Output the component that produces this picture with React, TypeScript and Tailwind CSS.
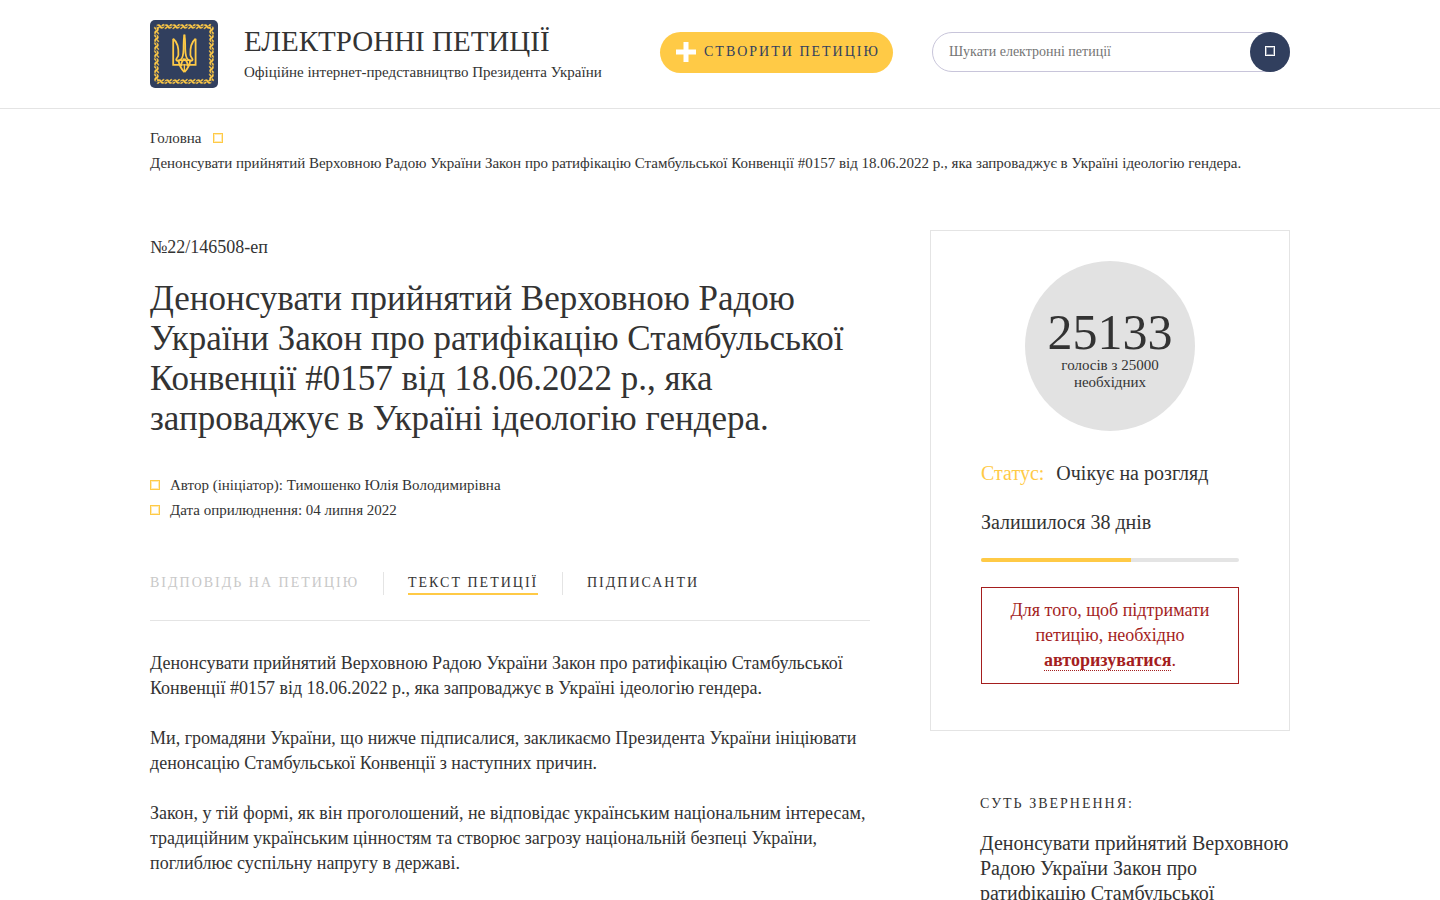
import React from "react";

const PETITION_TITLE =
  "Денонсувати прийнятий Верховною Радою України Закон про ратифікацію Стамбульської Конвенції #0157 від 18.06.2022 р., яка запроваджує в Україні ідеологію гендера.";

const PARAGRAPHS = [
  PETITION_TITLE,
  "Ми, громадяни України, що нижче підписалися, закликаємо Президента України ініціювати денонсацію Стамбульської Конвенції з наступних причин.",
  "Закон, у тій формі, як він проголошений, не відповідає українським національним інтересам, традиційним українським цінностям та створює загрозу національній безпеці України, поглиблює суспільну напругу в державі.",
];

function Ornament() {
  const steps = [0, 1, 2, 3, 4, 5, 6];
  return (
    <g fill="#ffca46" stroke="#ffca46" strokeWidth="0.4">
      {[0, 90, 180, 270].map((angle) => (
        <g key={angle} transform={`rotate(${angle} 34 34)`}>
          {steps.map((n) => (
            <g key={n} transform={`translate(${6.6 + n * 7.8} 4)`}>
              <path d="M0 1.2 C1.6 -.2 3.6 .4 4.4 2.2 C4.9 3.3 6 3.6 7.8 2.6 C7 4.6 4.4 5.2 3.4 3.6 C2.6 2.2 1.6 1.6 0 1.2 Z" />
              <path d="M.4 4.8 C.8 3.4 1.8 2.8 3 3 C2.6 4.3 1.7 4.9 .4 4.8 Z" />
              <path d="M5 2 C5.2 .8 6.2 .1 7.6 .4 C7.2 1.8 6.3 2.4 5 2 Z" />
            </g>
          ))}
        </g>
      ))}
    </g>
  );
}

function TridentHalf() {
  return (
    <g>
      <path d="M23.2 18.8 V44.8 H31" />
      <path d="M23.2 18.8 C27.8 22.5 28.8 28 28.4 35 C28.2 37.5 26 38 26.2 39.8 C26.6 41.4 29 40.8 30.8 39.6 C33 38 33.4 34 33.6 29 C33.7 23 33.4 20 34.4 14.6" />
      <path d="M28.6 40.6 C29.2 46 31 48.6 34.4 52.2" />
      <path d="M34.4 38.6 C32 41 30.8 43.4 31.2 46.4" />
    </g>
  );
}

function Logo() {
  return (
    <svg viewBox="0 0 68 68" className="size-[68px] shrink-0" aria-hidden="true">
      <rect width="68" height="68" rx="5" fill="#313f5e" />
      <Ornament />
      <g fill="none" stroke="#ffca46" strokeWidth="1.8">
        <TridentHalf />
        <g transform="translate(68.8 0) scale(-1 1)">
          <TridentHalf />
        </g>
        <path d="M34.4 44 V52 M27 40.4 H41.8 M30 44.8 H39" strokeWidth="1.3" />
      </g>
    </svg>
  );
}

function Header() {
  return (
    <header className="border-b border-[#e4e4e4]">
      <div className="mx-auto flex h-[108px] max-w-[1140px] items-center">
        <Logo />
        <div className="ml-[26px] w-[416px] shrink-0">
          <p className="text-[29px] leading-9 whitespace-nowrap">ЕЛЕКТРОННІ ПЕТИЦІЇ</p>
          <p className="text-[15px] leading-[26px] whitespace-nowrap">Офіційне інтернет-представництво Президента України</p>
        </div>
        <a
          href="#create"
          className="-mt-1 flex h-[41px] w-[233px] shrink-0 items-center gap-2 rounded-full bg-[#ffca46] pl-4 text-sm tracking-[2px] whitespace-nowrap text-[#313f5e]"
        >
          <svg viewBox="0 0 20 20" className="size-5 shrink-0" aria-hidden="true">
            <path d="M7.5 0h5v7.5H20v5h-7.5V20h-5v-7.5H0v-5h7.5z" fill="#fff" />
          </svg>
          СТВОРИТИ ПЕТИЦІЮ
        </a>
        <form className="-mt-1 ml-auto flex h-10 w-[358px] rounded-full border border-[#c8c5da]">
          <input
            type="text"
            aria-label="Шукати електронні петиції"
            placeholder="Шукати електронні петиції"
            className="min-w-0 grow bg-transparent pl-4 text-sm outline-none placeholder:text-[#757575]"
          />
          <button type="submit" aria-label="Шукати" className="-m-px flex size-10 shrink-0 items-center justify-center rounded-full bg-[#313f5e]">
            <span className="mb-0.5 size-[10px] border border-white shadow-[inset_0_0_0_1px_#ffffff66]" />
          </button>
        </form>
      </div>
    </header>
  );
}

function Square() {
  return <span className="mb-0.5 size-[10px] shrink-0 border border-[#ffca46] shadow-[inset_0_0_0_1px_#ffca4666]" />;
}

function Petition() {
  return (
    <article className="w-[720px]">
      <p className="pt-[5px] text-lg leading-6">№22/146508-еп</p>
      <h1 className="mt-5 text-[35px] leading-10">{PETITION_TITLE}</h1>
      <ul className="mt-[34px] text-[15px] leading-[25px]">
        <li className="flex items-center gap-[10px]">
          <Square />
          Автор (ініціатор): Тимошенко Юлія Володимирівна
        </li>
        <li className="flex items-center gap-[10px]">
          <Square />
          Дата оприлюднення: 04 липня 2022
        </li>
      </ul>
      <nav className="mt-[49px] flex h-[49px] items-start border-b border-[#e4e4e4] text-sm leading-[21px] tracking-[2px] whitespace-nowrap">
        <span className="w-[233px] text-[#c8c8c8]">ВІДПОВІДЬ НА ПЕТИЦІЮ</span>
        <div className="flex h-[23px] w-[179px] border-l border-[#e4e4e4] pl-6">
          <a href="#text" className="border-b-2 border-[#ffca46]">
            ТЕКСТ ПЕТИЦІЇ
          </a>
        </div>
        <div className="flex h-[23px] border-l border-[#e4e4e4] pl-6">
          <a href="#votes">ПІДПИСАНТИ</a>
        </div>
      </nav>
      <div className="mt-[30px] flex flex-col gap-[25px] text-lg leading-[25px]">
        {PARAGRAPHS.map((text) => (
          <p key={text}>{text}</p>
        ))}
      </div>
    </article>
  );
}

function Sidebar() {
  return (
    <aside className="w-[360px]">
      <section className="border border-[#e4e4e4] px-[50px] pt-[30px] pb-[46px]">
        <div className="mx-auto flex size-[170px] flex-col items-center rounded-full bg-[#e2e2e2] pt-[46px] text-center">
          <span className="text-[50px] leading-[50px]">25133</span>
          <span className="w-28 text-[15px] leading-[17px]">голосів з 25000 необхідних</span>
        </div>
        <p className="mt-[30px] flex gap-3 text-xl leading-6">
          <span className="text-[#ffca46]">Статус:</span>
          <span>Очікує на розгляд</span>
        </p>
        <p className="mt-[25px] text-xl leading-6">Залишилося 38 днів</p>
        <div className="mt-6 h-1 overflow-hidden rounded-sm bg-[#e4e4e4]">
          <div className="h-full w-[58%] bg-[#ffca46]" />
        </div>
        <p className="mt-[25px] border border-[#a41e1e] px-6 py-[10px] text-center text-lg leading-[25px] text-[#a41e1e]">
          Для того, щоб підтримати петицію, необхідно{" "}
          <a href="#login" className="border-b border-dotted border-[#a41e1e] font-bold">
            авторизуватися
          </a>
          .
        </p>
      </section>
      <section className="mt-[60px] pl-[50px]">
        <h2 className="text-sm leading-[26px] tracking-[2px]">СУТЬ ЗВЕРНЕННЯ:</h2>
        <p className="mt-[14px] text-xl leading-[25px]">{PETITION_TITLE}</p>
      </section>
    </aside>
  );
}

export default function App() {
  return (
    <div className="min-h-screen bg-white font-['Liberation_Serif',serif] text-[#333]">
      <Header />
      <main className="mx-auto max-w-[1140px]">
        <nav className="pt-[17px] text-[15px] leading-[25px]">
          <div className="flex items-center gap-3">
            <a href="#home">Головна</a>
            <Square />
          </div>
          <p>{PETITION_TITLE}</p>
        </nav>
        <div className="mt-[54px] flex items-start justify-between">
          <Petition />
          <Sidebar />
        </div>
      </main>
    </div>
  );
}
